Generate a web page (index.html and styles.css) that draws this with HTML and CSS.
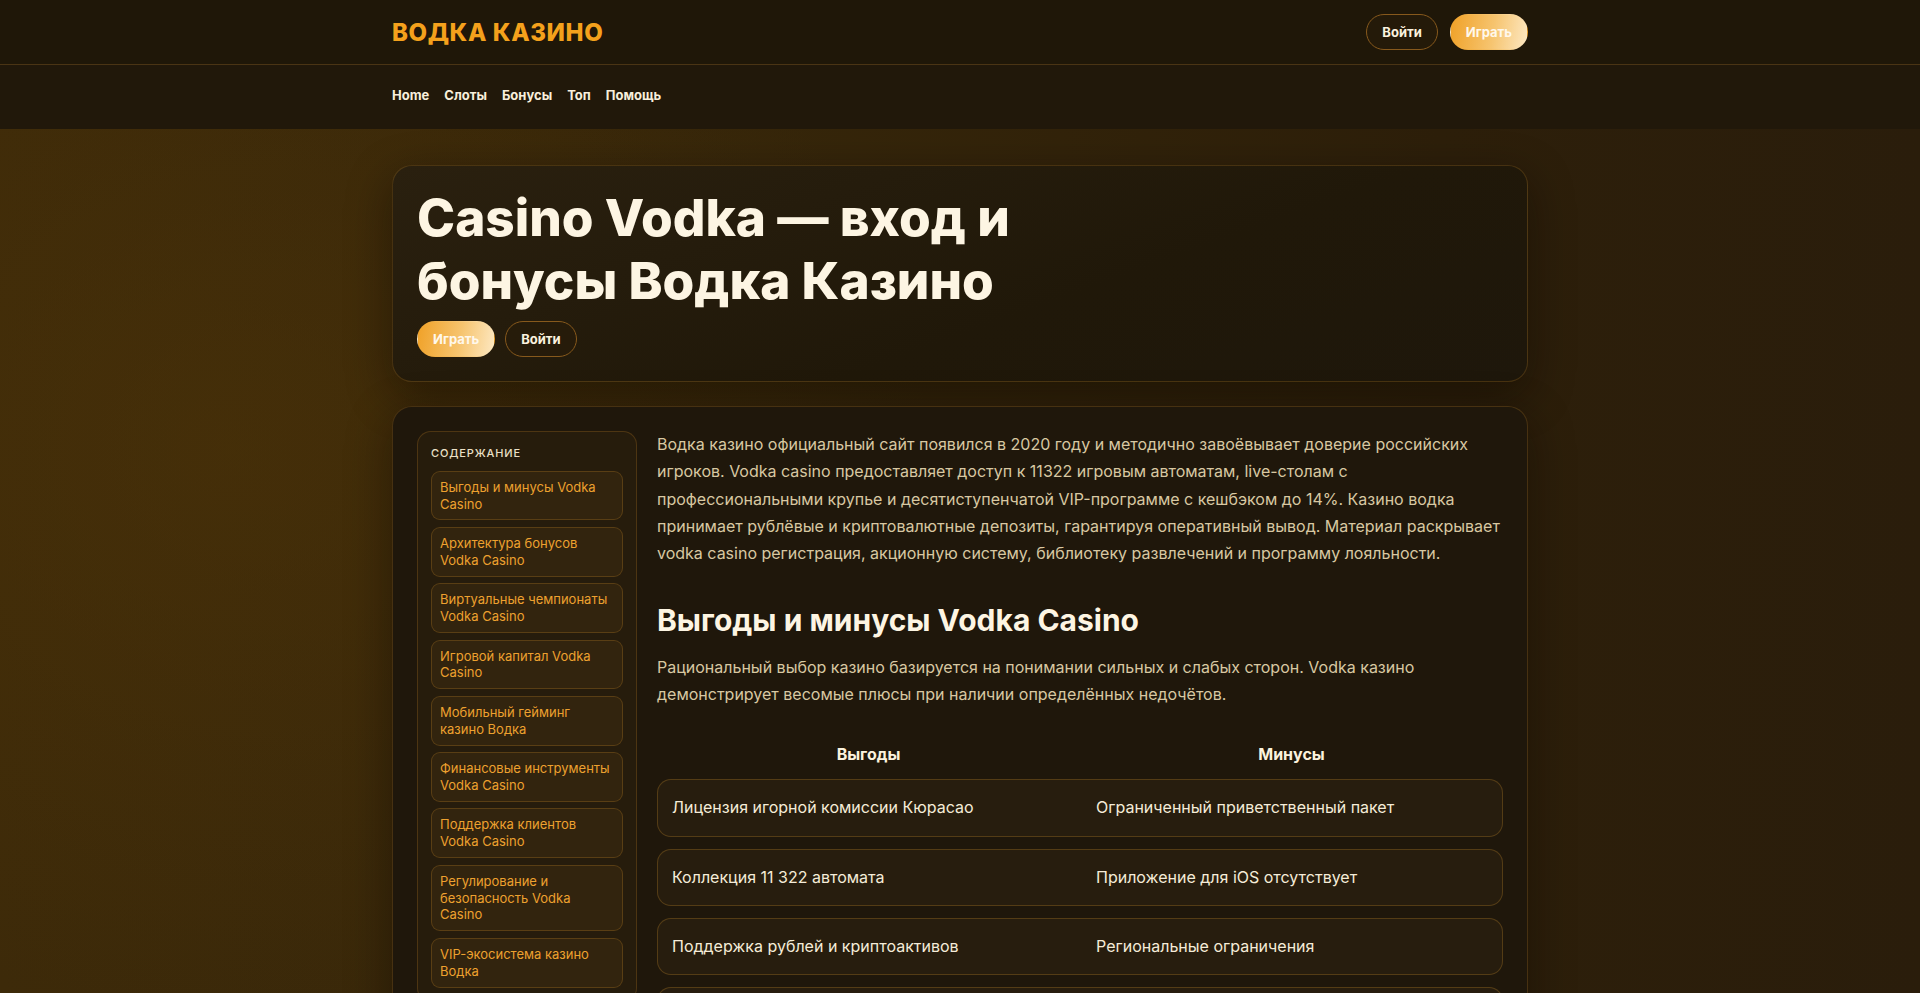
FILE: index.html
```html
<!DOCTYPE html>
<html lang="ru">
<head>
    <meta charset="UTF-8">
    <meta name="viewport" content="width=device-width, initial-scale=1.0">
    <title>Casino Vodka — вход и бонусы Водка Казино</title>
    <link rel="stylesheet" href="styles.css">
</head>
<body>
    <header class="site-header">
        <div class="topbar">
            <div class="wrap topbar-inner">
                <a class="logo" href="#">ВОДКА КАЗИНО</a>
                <div class="actions">
                    <a class="btn btn-ghost" href="#">Войти</a>
                    <a class="btn btn-gold" href="#">Играть</a>
                </div>
            </div>
        </div>
        <nav class="mainnav">
            <div class="wrap mainnav-inner">
                <a href="#">Home</a>
                <a href="#">Слоты</a>
                <a href="#">Бонусы</a>
                <a href="#">Топ</a>
                <a href="#">Помощь</a>
            </div>
        </nav>
    </header>

    <main class="wrap page">
        <section class="card hero">
            <h1>Casino Vodka — вход и бонусы Водка Казино</h1>
            <div class="hero-actions">
                <a class="btn btn-gold" href="#">Играть</a>
                <a class="btn btn-ghost" href="#">Войти</a>
            </div>
        </section>

        <section class="card content">
            <aside class="toc">
                <div class="toc-title">Содержание</div>
                <a class="toc-item" href="#pros">Выгоды и минусы Vodka Casino</a>
                <a class="toc-item" href="#">Архитектура бонусов Vodka Casino</a>
                <a class="toc-item" href="#">Виртуальные чемпионаты Vodka Casino</a>
                <a class="toc-item" href="#">Игровой капитал Vodka Casino</a>
                <a class="toc-item" href="#">Мобильный гейминг казино Водка</a>
                <a class="toc-item" href="#">Финансовые инструменты Vodka Casino</a>
                <a class="toc-item" href="#">Поддержка клиентов Vodka Casino</a>
                <a class="toc-item" href="#">Регулирование и безопасность Vodka Casino</a>
                <a class="toc-item" href="#">VIP-экосистема казино Водка</a>
            </aside>

            <article class="article">
                <p>Водка казино официальный сайт появился в 2020 году и методично завоёвывает доверие российских игроков. Vodka casino предоставляет доступ к 11322 игровым автоматам, live-столам с профессиональными крупье и десятиступенчатой VIP-программе с кешбэком до 14%. Казино водка принимает рублёвые и криптовалютные депозиты, гарантируя оперативный вывод. Материал раскрывает vodka casino регистрация, акционную систему, библиотеку развлечений и программу лояльности.</p>

                <h2 id="pros">Выгоды и минусы Vodka Casino</h2>
                <p>Рациональный выбор казино базируется на понимании сильных и слабых сторон. Vodka казино демонстрирует весомые плюсы при наличии определённых недочётов.</p>

                <table class="compare">
                    <thead>
                        <tr><th>Выгоды</th><th>Минусы</th></tr>
                    </thead>
                    <tbody>
                        <tr><td>Лицензия игорной комиссии Кюрасао</td><td>Ограниченный приветственный пакет</td></tr>
                        <tr><td>Коллекция 11 322 автомата</td><td>Приложение для iOS отсутствует</td></tr>
                        <tr><td>Поддержка рублей и криптоактивов</td><td>Региональные ограничения</td></tr>
                        <tr><td>Кешбэк до 14% в VIP-программе</td><td>Вейджер на бонусы выше среднего</td></tr>
                    </tbody>
                </table>
            </article>
        </section>
    </main>
</body>
</html>
```

FILE: styles.css
```css
* { box-sizing: border-box; }
body {
    margin: 0;
    font-family: Inter, "Noto Sans", sans-serif;
    color: #f6ecd6;
    background:
        radial-gradient(ellipse 1000px 800px at 12% 40%, rgba(78, 52, 8, 0.5), transparent 70%),
        linear-gradient(90deg, #3d2a09 0%, #36260a 40%, #2d1f0a 75%, #2a1d0b 100%);
    min-height: 100vh;
}
a { color: inherit; text-decoration: none; }
.wrap { max-width: 1136px; margin: 0 auto; }

/* header */
.topbar { background: #1f1708; border-bottom: 1px solid #4a3414; }
.topbar-inner { height: 64px; display: flex; align-items: center; justify-content: space-between; }
.logo { font-size: 24px; font-weight: 800; color: #f4a11c; letter-spacing: 0.6px; }
.actions { display: flex; gap: 12px; }
.btn {
    display: inline-flex; align-items: center; height: 36px; padding: 0 15px;
    border-radius: 18px; font-size: 13px; font-weight: 700; border: 1px solid transparent;
}
.btn-ghost { border-color: #87591c; background: rgba(40, 28, 10, 0.6); color: #fbf2df; }
.btn-gold { background: linear-gradient(100deg, #f0a127 0%, #f6c46f 55%, #fde8c2 100%); color: #fff8ec; }

.mainnav { background: #21180a; }
.mainnav-inner { height: 64px; padding-bottom: 5px; display: flex; align-items: center; gap: 15px; }
.mainnav a { font-size: 13px; font-weight: 700; color: #f8efdc; }

/* page */
.page { padding: 36px 0 40px; display: flex; flex-direction: column; gap: 24px; }
.card {
    border: 1px solid rgba(214, 146, 40, 0.22);
    border-radius: 20px;
    box-shadow: 0 14px 45px rgba(10, 6, 0, 0.45);
}
.hero {
    padding: 20px 24px 24px;
    background: linear-gradient(160deg, #2a200f 0%, #201809 60%, #1e170b 100%);
}
.hero h1 {
    margin: 0 0 10px; max-width: 700px;
    font-size: 51.3px; line-height: 1.22; font-weight: 800; letter-spacing: 0; color: #fdf5e3;
}
.hero-actions { display: flex; gap: 10px; }

.content {
    padding: 24px; background: #1f170b;
    display: grid; grid-template-columns: 220px 1fr; gap: 20px; align-items: start;
}

/* toc */
.toc {
    border: 1px solid rgba(214, 146, 40, 0.22); border-radius: 14px;
    background: rgba(255, 180, 60, 0.035); padding: 13px;
    display: flex; flex-direction: column; gap: 6.5px;
}
.toc-title {
    font-size: 11px; line-height: 16px; font-weight: 500; letter-spacing: 0.08em;
    text-transform: uppercase; color: #ebe0c7; margin-bottom: 3px;
}
.toc-item {
    font-size: 13px; line-height: 1.3; color: #eda12f;
    padding: 7px 8px; border-radius: 9px;
    border: 1px solid rgba(214, 146, 40, 0.24); background: rgba(255, 170, 50, 0.06);
}

/* article */
.article p { margin: 0 0 16px; font-size: 16px; line-height: 1.7; color: #d8c8a2; }
.article h2 { margin: 34px 0 14px; font-size: 30px; line-height: 1.3; font-weight: 700; color: #fdf5e3; }
.compare { width: 100%; border-collapse: separate; border-spacing: 0 12px; margin-top: -2px; table-layout: fixed; }
.compare th { font-size: 16px; font-weight: 700; color: #fbf2dd; padding: 10px 16px 3px; text-align: center; }
.compare td {
    padding: 16px; font-size: 16px; line-height: 1.45; color: #f5ecd8;
    background: rgba(255, 190, 90, 0.04);
    border-top: 1px solid rgba(200, 145, 45, 0.28); border-bottom: 1px solid rgba(200, 145, 45, 0.28);
}
.compare td:first-child { padding-left: 14px; border-left: 1px solid rgba(200, 145, 45, 0.28); border-radius: 14px 0 0 14px; }
.compare td:last-child { border-right: 1px solid rgba(200, 145, 45, 0.28); border-radius: 0 14px 14px 0; }
```
